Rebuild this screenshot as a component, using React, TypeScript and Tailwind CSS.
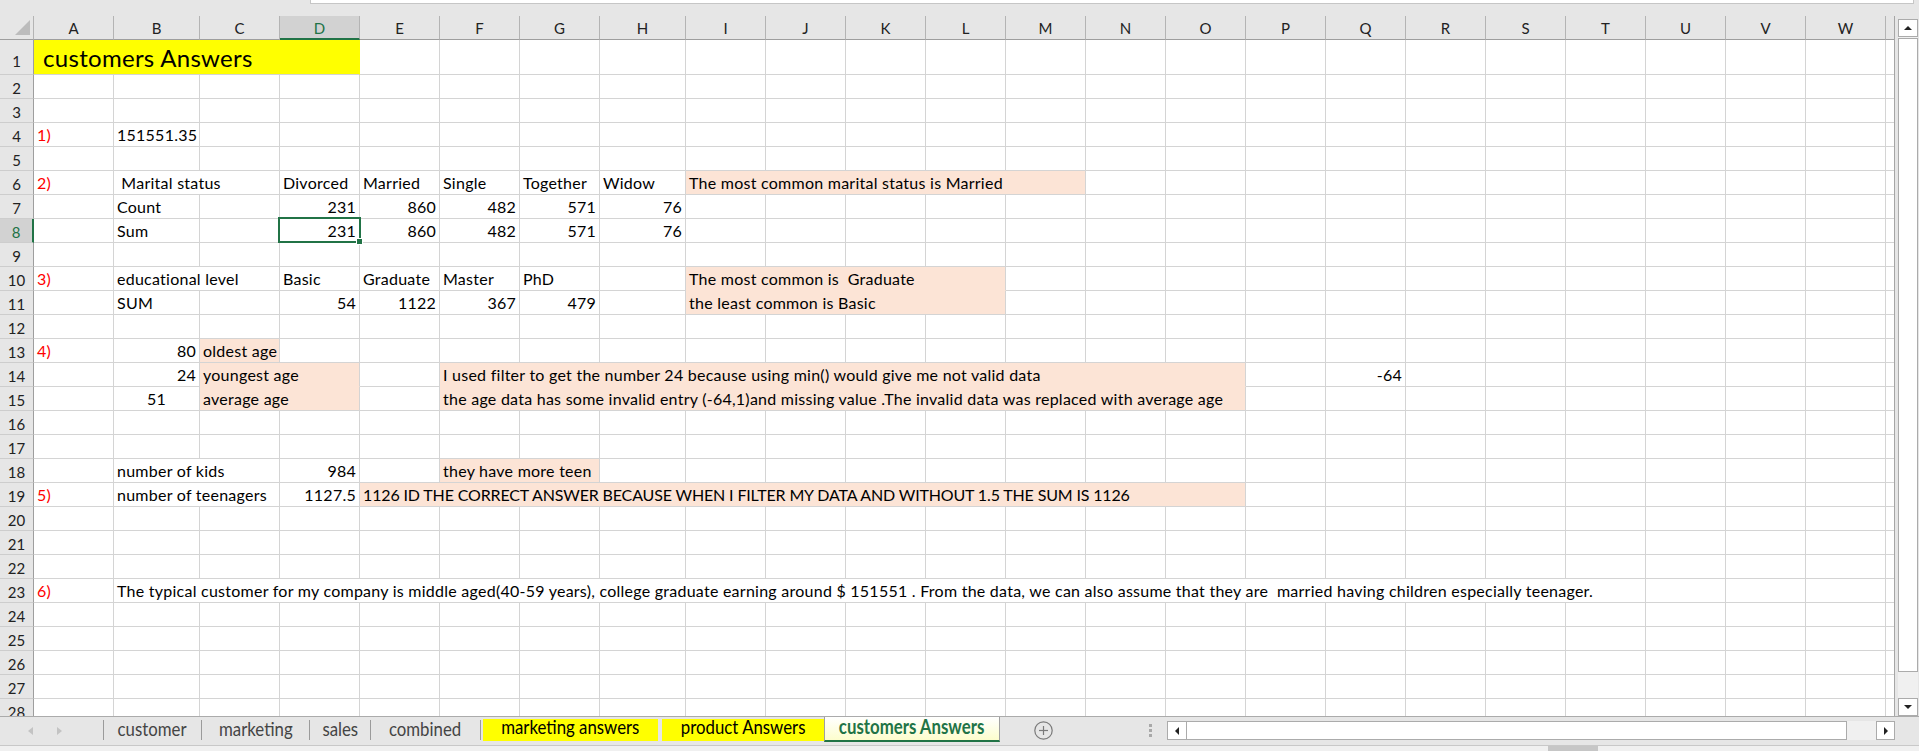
import React from 'react';

type Bg = 'peach' | 'yellow' | undefined;
interface Block {
  c: number;
  s?: number;
  t?: string;
  a?: 'l' | 'r' | 'c';
  bg?: Bg;
  red?: boolean;
  top?: boolean;
  title?: boolean;
  sel?: boolean;
  caps?: boolean;
}

const SPAN: Record<number, string> = {
  1: 'col-span-1', 2: 'col-span-2', 3: 'col-span-3', 4: 'col-span-4', 5: 'col-span-5',
  6: 'col-span-6', 7: 'col-span-7', 8: 'col-span-8', 9: 'col-span-9', 10: 'col-span-10',
  11: 'col-span-11', 12: 'col-span-12', 13: 'col-span-13', 14: 'col-span-14', 15: 'col-span-15',
  16: 'col-span-16', 17: 'col-span-17', 18: 'col-span-18', 19: 'col-span-19', 20: 'col-span-20',
};

const LETTERS = 'ABCDEFGHIJKLMNOPQRSTUVW'.split('');
const NCOLS = 24;

const ROWS: Record<number, Block[]> = {
  1: [{ c: 0, s: 4, t: 'customers Answers', bg: 'yellow', title: true }],
  4: [{ c: 0, t: '1)', red: true }, { c: 1, t: '151551.35' }],
  6: [
    { c: 0, t: '2)', red: true },
    { c: 1, s: 2, t: ' Marital status' },
    { c: 3, t: 'Divorced' },
    { c: 4, t: 'Married' },
    { c: 5, t: 'Single' },
    { c: 6, t: 'Together' },
    { c: 7, t: 'Widow' },
    { c: 8, s: 5, t: 'The most common marital status is Married', bg: 'peach' },
  ],
  7: [
    { c: 1, t: 'Count' },
    { c: 3, t: '231', a: 'r' },
    { c: 4, t: '860', a: 'r' },
    { c: 5, t: '482', a: 'r' },
    { c: 6, t: '571', a: 'r' },
    { c: 7, t: '76', a: 'r' },
  ],
  8: [
    { c: 1, t: 'Sum' },
    { c: 3, t: '231', a: 'r', sel: true },
    { c: 4, t: '860', a: 'r' },
    { c: 5, t: '482', a: 'r' },
    { c: 6, t: '571', a: 'r' },
    { c: 7, t: '76', a: 'r' },
  ],
  10: [
    { c: 0, t: '3)', red: true },
    { c: 1, s: 2, t: 'educational level' },
    { c: 3, t: 'Basic' },
    { c: 4, t: 'Graduate' },
    { c: 5, t: 'Master' },
    { c: 6, t: 'PhD' },
    { c: 8, s: 4, t: 'The most common is  Graduate', bg: 'peach', top: true },
  ],
  11: [
    { c: 1, t: 'SUM' },
    { c: 3, t: '54', a: 'r' },
    { c: 4, t: '1122', a: 'r' },
    { c: 5, t: '367', a: 'r' },
    { c: 6, t: '479', a: 'r' },
    { c: 8, s: 4, t: 'the least common is Basic', bg: 'peach' },
  ],
  13: [
    { c: 0, t: '4)', red: true },
    { c: 1, t: '80', a: 'r' },
    { c: 2, t: 'oldest age', bg: 'peach' },
  ],
  14: [
    { c: 1, t: '24', a: 'r' },
    { c: 2, s: 2, t: 'youngest age', bg: 'peach', top: true },
    { c: 5, s: 10, t: 'I used filter to get the number 24 because using min() would give me not valid data', bg: 'peach', top: true },
    { c: 16, t: '-64', a: 'r' },
  ],
  15: [
    { c: 1, t: '51', a: 'c' },
    { c: 2, s: 2, t: 'average age', bg: 'peach' },
    { c: 5, s: 10, t: 'the age data has some invalid entry (-64,1)and missing value .The invalid data was replaced with average age', bg: 'peach' },
  ],
  18: [
    { c: 1, s: 2, t: 'number of kids' },
    { c: 3, t: '984', a: 'r' },
    { c: 5, s: 2, t: 'they have more teen', bg: 'peach' },
  ],
  19: [
    { c: 0, t: '5)', red: true },
    { c: 1, s: 2, t: 'number of teenagers' },
    { c: 3, t: '1127.5', a: 'r' },
    { c: 4, s: 11, t: '1126 ID THE CORRECT ANSWER BECAUSE WHEN I FILTER MY DATA AND WITHOUT 1.5 THE SUM IS 1126', bg: 'peach', caps: true },
  ],
  23: [
    { c: 0, t: '6)', red: true },
    {
      c: 1,
      s: 19,
      t: 'The typical customer for my company is middle aged(40-59 years), college graduate earning around $ 151551 . From the data, we can also assume that they are  married having children especially teenager.',
    },
  ],
};

function buildRow(blocks: Block[]): Block[] {
  const out: Block[] = [];
  let c = 0;
  const sorted = [...blocks].sort((a, b) => a.c - b.c);
  for (const b of sorted) {
    while (c < b.c) {
      out.push({ c });
      c++;
    }
    out.push(b);
    c += b.s ?? 1;
  }
  while (c < NCOLS) {
    out.push({ c });
    c++;
  }
  return out;
}

function Cell({ b, r }: { b: Block; r: number }) {
  const isX = b.c === 23;
  const isLastRow = r === 28;
  const bgCls = b.bg === 'peach' ? 'bg-[#fce4d6]' : b.bg === 'yellow' ? 'bg-[#ffff00]' : 'bg-white';
  const rightCls = isX ? '' : b.bg === 'yellow' ? 'border-r border-r-[#ffff00]' : 'border-r border-r-[#d4d4d4]';
  const bottomCls = isLastRow ? '' : b.top ? 'border-b border-b-[#fce4d6]' : 'border-b border-b-[#d4d4d4]';
  const align = b.a === 'r' ? 'justify-end' : b.a === 'c' ? 'justify-center' : 'justify-start';
  const textCls = b.title
    ? 'text-[24px] leading-[26px] tracking-[0.3px] pl-[9px] pb-[3px]'
    : b.caps
    ? 'text-[16px] leading-[18px] tracking-[-0.15px] px-[3px] pb-[2px]'
    : 'text-[16px] leading-[18px] tracking-[0.25px] px-[3px] pb-[2px]';
  return (
    <div
      className={`${SPAN[b.s ?? 1]} relative flex items-end ${align} ${bgCls} ${rightCls} ${bottomCls} ${textCls} whitespace-pre ${
        b.red ? 'text-[#ff0000]' : 'text-black'
      }`}
    >
      {b.t ? <span>{b.t}</span> : null}
      {b.sel ? (
        <>
          <div className="absolute -left-[2px] -top-[2px] w-[83px] h-[26px] border-2 border-[#217346] pointer-events-none z-10" />
          <div className="absolute left-[76px] top-[19px] w-[7px] h-[7px] bg-[#217346] border border-white z-20" />
        </>
      ) : null}
    </div>
  );
}

function RowHeader({ r }: { r: number }) {
  const sel = r === 8;
  const last = r === 28;
  return (
    <div
      className={`relative overflow-hidden ${sel ? 'bg-[#d2d2d2] text-[#217346] border-r-2 border-r-[#217346]' : 'bg-[#e6e6e6] text-[#222222] border-r border-r-[#9e9e9e]'} ${
        last ? '' : 'border-b border-b-[#cdcdcd]'
      }`}
    >
      <div
        className={`flex items-end justify-center text-[15px] leading-[18px] ${
          r === 1 ? 'h-[34px] pb-[4px]' : 'h-[23px] pb-[1.5px]'
        }`}
      >
        {r}
      </div>
    </div>
  );
}

function HeaderRow() {
  return (
    <>
      <div className="relative bg-[#e6e6e6] border-r border-r-[#b4b4b4] border-b border-b-[#9e9e9e]">
        <svg width="34" height="24" className="absolute left-0 top-0">
          <polygon points="30,4 30,19 15,19" fill="#bcbcbc" />
        </svg>
      </div>
      {LETTERS.map((l) => {
        const sel = l === 'D';
        return (
          <div
            key={l}
            className={`flex items-center justify-center text-[15px] leading-[18px] pt-[1px] border-r border-r-[#b4b4b4] ${
              sel
                ? 'bg-[#d2d2d2] text-[#217346] border-b-2 border-b-[#217346]'
                : 'bg-[#e6e6e6] text-[#222222] border-b border-b-[#9e9e9e]'
            }`}
          >
            {l}
          </div>
        );
      })}
      <div className="bg-[#e6e6e6] border-b border-b-[#9e9e9e]" />
    </>
  );
}

function Grid() {
  const rows: number[] = [];
  for (let i = 1; i <= 28; i++) rows.push(i);
  return (
    <div className="grid grid-cols-[34px_80px_86px_repeat(5,80px)_86px_repeat(15,80px)_8px] grid-rows-[24px_35px_repeat(26,24px)_17px] w-[1895px] h-[700px] shrink-0 border-r border-r-[#a6a6a6] overflow-hidden bg-white">
      <HeaderRow />
      {rows.map((r) => (
        <React.Fragment key={r}>
          <RowHeader r={r} />
          {buildRow(ROWS[r] ?? []).map((b) => (
            <Cell key={`${r}-${b.c}`} b={b} r={r} />
          ))}
        </React.Fragment>
      ))}
    </div>
  );
}

function VScroll() {
  return (
    <div className="w-[24px] h-[700px] shrink-0 pl-[3px] pt-[3px]">
      <div className="w-[20px] h-full flex flex-col bg-[#f0f0f0]">
        <div className="h-[18px] shrink-0 bg-white border border-[#ababab] flex items-center justify-center">
          <div className="w-0 h-0 border-x-[4px] border-x-transparent border-b-[4px] border-b-[#222222]" />
        </div>
        <div className="h-[634px] shrink-0 mt-[1px] bg-white border border-[#ababab]" />
        <div className="flex-1" />
        <div className="h-[18px] shrink-0 bg-white border border-[#ababab] flex items-center justify-center">
          <div className="w-0 h-0 border-x-[4px] border-x-transparent border-t-[4px] border-t-[#222222]" />
        </div>
      </div>
    </div>
  );
}

function Sep() {
  return <div className="w-px h-[20px] mt-[3px] bg-[#9b9b9b] shrink-0" />;
}

function TabLabel({ children, cls }: { children: React.ReactNode; cls: string }) {
  return (
    <span className={`inline-block scale-x-[0.84] text-[20px] leading-[14px] whitespace-nowrap ${cls}`}>{children}</span>
  );
}

function TabStrip() {
  return (
    <div className="flex h-[29px] shrink-0 border-t border-t-[#ababab] bg-[#e6e6e6]">
      <div className="w-[103px] h-full shrink-0 flex items-center">
        <div className="ml-[28px] w-0 h-0 border-y-[4px] border-y-transparent border-r-[5px] border-r-[#c3c3c3]" />
        <div className="ml-[24px] w-0 h-0 border-y-[4px] border-y-transparent border-l-[5px] border-l-[#c3c3c3]" />
      </div>
      <Sep />
      <div className="w-[97px] shrink-0 h-[23px] mt-[2px] pt-[2px] flex justify-center">
        <TabLabel cls="text-[#444444]">customer</TabLabel>
      </div>
      <Sep />
      <div className="w-[107px] shrink-0 h-[23px] mt-[2px] pt-[2px] flex justify-center">
        <TabLabel cls="text-[#444444]">marketing</TabLabel>
      </div>
      <Sep />
      <div className="w-[60px] shrink-0 h-[23px] mt-[2px] pt-[2px] flex justify-center">
        <TabLabel cls="text-[#444444]">sales</TabLabel>
      </div>
      <Sep />
      <div className="w-[109px] shrink-0 h-[23px] mt-[2px] pt-[2px] flex justify-center">
        <TabLabel cls="text-[#444444]">combined</TabLabel>
      </div>
      <Sep />
      <div className="w-[2px] shrink-0" />
      <div className="w-[175px] shrink-0 h-[22px] mt-[2px] bg-[#ffff00] flex justify-center">
        <TabLabel cls="text-black">marketing answers</TabLabel>
      </div>
      <div className="w-[4px] shrink-0" />
      <div className="w-[162px] shrink-0 h-[22px] mt-[2px] bg-[#ffff00] flex justify-center">
        <TabLabel cls="text-black">product Answers</TabLabel>
      </div>
      <div className="w-[176px] shrink-0 h-[25px] pt-[2px] flex justify-center bg-linear-to-b from-white to-[#fdfdcc] border-x border-x-[#a0a0a0] border-b-2 border-b-[#217346]">
        <TabLabel cls="text-[#217346] font-bold">customers Answers</TabLabel>
      </div>
      <div className="ml-[34px] mt-[4px] w-[19px] h-[19px] shrink-0">
        <svg width="19" height="19" viewBox="0 0 19 19">
          <circle cx="9.5" cy="9.5" r="8.7" fill="none" stroke="#7a7a7a" strokeWidth="1.2" />
          <line x1="5" y1="9.5" x2="14" y2="9.5" stroke="#7a7a7a" strokeWidth="1.2" />
          <line x1="9.5" y1="5" x2="9.5" y2="14" stroke="#7a7a7a" strokeWidth="1.2" />
        </svg>
      </div>
      <div className="ml-[96px] mt-[7px] w-[3px] shrink-0 flex flex-col gap-[2px]">
        <div className="w-[3px] h-[3px] bg-[#a8a8a8]" />
        <div className="w-[3px] h-[3px] bg-[#a8a8a8]" />
        <div className="w-[3px] h-[3px] bg-[#a8a8a8]" />
      </div>
      <div className="ml-[15px] mt-[4px] w-[728px] h-[19px] shrink-0 flex bg-[#f0f0f0]">
        <div className="w-[20px] h-full shrink-0 bg-white border border-[#ababab] flex items-center justify-center">
          <div className="w-0 h-0 border-y-[4px] border-y-transparent border-r-[4px] border-r-[#222222]" />
        </div>
        <div className="w-[660px] h-full shrink-0 bg-white border-y border-r border-[#ababab]" />
        <div className="flex-1" />
        <div className="w-[19px] h-full shrink-0 bg-white border border-[#ababab] flex items-center justify-center">
          <div className="w-0 h-0 border-y-[4px] border-y-transparent border-l-[4px] border-l-[#222222]" />
        </div>
      </div>
    </div>
  );
}

export default function App() {
  return (
    <div className="w-[1919px] h-[751px] bg-[#e6e6e6] overflow-hidden font-['Lato',sans-serif] flex flex-col">
      <div className="h-[16px] shrink-0 pl-[310px]">
        <div className="w-[1604px] h-[4px] bg-white border-x border-b border-[#c6c6c6]" />
      </div>
      <div className="flex h-[700px] shrink-0">
        <Grid />
        <VScroll />
      </div>
      <TabStrip />
      <div className="h-[6px] shrink-0 border-t border-t-[#c8c8c8] bg-[#f0f0f0]">
        <div className="ml-[1548px] w-[50px] h-full bg-[#c6c6c6]" />
      </div>
    </div>
  );
}
